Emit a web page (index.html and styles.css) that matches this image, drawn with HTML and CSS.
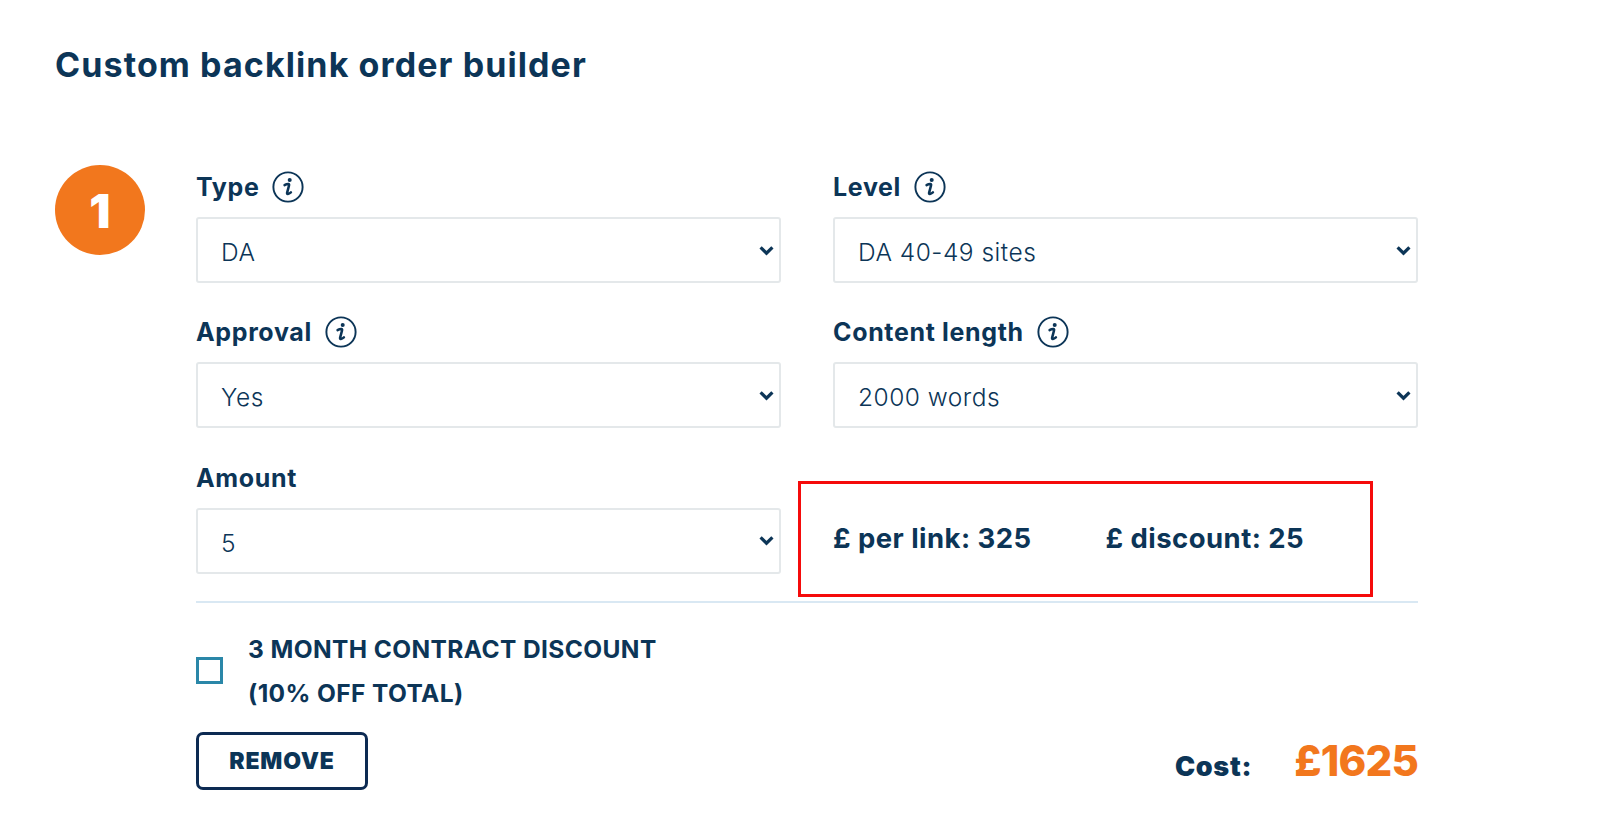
FILE: index.html
```html
<!DOCTYPE html>
<html lang="en">
<head>
<meta charset="utf-8">
<title>Custom backlink order builder</title>
<link rel="stylesheet" href="styles.css">
</head>
<body>
<main class="page">
  <h1 class="title">Custom backlink order builder</h1>
  <section class="builder">
    <div class="step">1</div>
    <div class="form">
      <div class="grid">
        <div class="field">
          <div class="label">Type <svg class="info" viewBox="0 0 30 30"><circle cx="15" cy="15" r="13.7"/><path class="dot" d="M16.6 6.6a1.9 1.9 0 1 1-.01 3.8 1.9 1.9 0 0 1 .01-3.8z"/><path class="stem" d="M11.8 13.2c1.2-.7 2.6-1.1 3.7-1 .6.1.6.8.4 1.6l-1.7 6.4c-.2.9 0 1.4.7 1.3.9-.1 1.9-.7 2.8-1.5"/></svg></div>
          <div class="select"><span>DA</span><svg class="chev" viewBox="0 0 14 10"><path d="M1.5 2 7 7.5 12.5 2"/></svg></div>
        </div>
        <div class="field">
          <div class="label">Level <svg class="info" viewBox="0 0 30 30"><circle cx="15" cy="15" r="13.7"/><path class="dot" d="M16.6 6.6a1.9 1.9 0 1 1-.01 3.8 1.9 1.9 0 0 1 .01-3.8z"/><path class="stem" d="M11.8 13.2c1.2-.7 2.6-1.1 3.7-1 .6.1.6.8.4 1.6l-1.7 6.4c-.2.9 0 1.4.7 1.3.9-.1 1.9-.7 2.8-1.5"/></svg></div>
          <div class="select"><span>DA 40-49 sites</span><svg class="chev" viewBox="0 0 14 10"><path d="M1.5 2 7 7.5 12.5 2"/></svg></div>
        </div>
        <div class="field">
          <div class="label">Approval <svg class="info" viewBox="0 0 30 30"><circle cx="15" cy="15" r="13.7"/><path class="dot" d="M16.6 6.6a1.9 1.9 0 1 1-.01 3.8 1.9 1.9 0 0 1 .01-3.8z"/><path class="stem" d="M11.8 13.2c1.2-.7 2.6-1.1 3.7-1 .6.1.6.8.4 1.6l-1.7 6.4c-.2.9 0 1.4.7 1.3.9-.1 1.9-.7 2.8-1.5"/></svg></div>
          <div class="select"><span>Yes</span><svg class="chev" viewBox="0 0 14 10"><path d="M1.5 2 7 7.5 12.5 2"/></svg></div>
        </div>
        <div class="field">
          <div class="label">Content length <svg class="info" viewBox="0 0 30 30"><circle cx="15" cy="15" r="13.7"/><path class="dot" d="M16.6 6.6a1.9 1.9 0 1 1-.01 3.8 1.9 1.9 0 0 1 .01-3.8z"/><path class="stem" d="M11.8 13.2c1.2-.7 2.6-1.1 3.7-1 .6.1.6.8.4 1.6l-1.7 6.4c-.2.9 0 1.4.7 1.3.9-.1 1.9-.7 2.8-1.5"/></svg></div>
          <div class="select"><span>2000 words</span><svg class="chev" viewBox="0 0 14 10"><path d="M1.5 2 7 7.5 12.5 2"/></svg></div>
        </div>
        <div class="field">
          <div class="label">Amount</div>
          <div class="select"><span>5</span><svg class="chev" viewBox="0 0 14 10"><path d="M1.5 2 7 7.5 12.5 2"/></svg></div>
        </div>
        <div class="prices">
          <span class="price">£ per link: 325</span>
          <span class="price">£ discount: 25</span>
          <div class="highlight"></div>
        </div>
      </div>
      <hr class="rule">
      <div class="contract">
        <span class="check"></span>
        <div class="contract-text">3 MONTH CONTRACT DISCOUNT<br>(10% OFF TOTAL)</div>
      </div>
      <div class="footer">
        <button class="remove" type="button">REMOVE</button>
        <div class="cost"><span class="cost-label">Cost:</span><span class="cost-value">£1625</span></div>
      </div>
    </div>
  </section>
</main>
</body>
</html>
```
FILE: styles.css
```css
* { box-sizing: border-box; }
html, body { margin: 0; background: #fff; }
body {
  width: 1600px;
  height: 813px;
  overflow: hidden;
  font-family: Inter, "Open Sans", "Liberation Sans", sans-serif;
  color: #0c3557;
}
.page { padding: 44px 0 0 55px; }
.title {
  margin: 0;
  font-size: 34px;
  line-height: 42px;
  font-weight: 700;
  letter-spacing: 1.1px;
}
.builder {
  display: flex;
  margin-top: 79px;
}
.step {
  flex: none;
  width: 90px;
  height: 90px;
  margin-right: 51px;
  border-radius: 50%;
  background: #f2771d;
  color: #fff;
  font-size: 47px;
  font-weight: 900;
  display: flex;
  align-items: center;
  justify-content: center;
}
.form { width: 1222px; padding-top: 6px; }
.grid {
  display: grid;
  grid-template-columns: 585px 585px;
  column-gap: 52px;
  row-gap: 33.4px;
}
.field { display: flex; flex-direction: column; gap: 14px; }
.label {
  display: flex;
  align-items: center;
  gap: 13px;
  height: 32px;
  font-size: 25px;
  line-height: 32px;
  font-weight: 700;
  letter-spacing: 0.65px;
}
.info { width: 32px; height: 32px; flex: none; }
.info circle { fill: none; stroke: #0c3557; stroke-width: 1.8; }
.info .dot { fill: #0c3557; }
.info .stem { fill: none; stroke: #0c3557; stroke-width: 2.4; stroke-linecap: round; }
.select {
  height: 66px;
  border: 2px solid #e4e8ea;
  border-radius: 3px;
  padding: 4px 5px 0 23px;
  display: flex;
  align-items: center;
  justify-content: space-between;
  font-size: 24.5px;
  font-weight: 300;
  letter-spacing: 0.5px;
}
.chev { width: 15px; height: 11px; margin-top: -4px; }
.chev path { fill: none; stroke: #0c3557; stroke-width: 3; }
.prices {
  position: relative;
  display: flex;
  align-items: flex-end;
  gap: 74px;
  padding-bottom: 20px;
  font-size: 27.5px;
  font-weight: 700;
  line-height: 32px;
  letter-spacing: 0.45px;
}
.highlight {
  position: absolute;
  left: -35px;
  top: 19px;
  width: 575px;
  height: 116px;
  border: 3px solid #f50b0b;
}
.rule {
  margin: 27px 0 0;
  border: 0;
  height: 2px;
  background: #d9e8f3;
}
.contract {
  display: flex;
  align-items: center;
  margin-top: 24px;
}
.check {
  width: 27px;
  height: 27px;
  margin-right: 25px;
  border: 3px solid #2a87a8;
}
.contract-text {
  font-size: 24.5px;
  line-height: 44px;
  font-weight: 700;
  letter-spacing: 0.4px;
}
.footer {
  display: flex;
  justify-content: space-between;
  align-items: center;
  margin-top: 17px;
}
.remove {
  width: 172px;
  height: 58px;
  border: 3px solid #0c2a52;
  border-radius: 7px;
  background: #fff;
  color: #0c3557;
  font: 900 23px Inter, "Liberation Sans", sans-serif;
  letter-spacing: 0.8px;
}
.cost { display: flex; align-items: baseline; gap: 42px; }
.cost-label { font-size: 27px; font-weight: 900; letter-spacing: 0.7px; }
.cost-value { font-size: 42px; line-height: 50px; font-weight: 800; color: #f2771d; letter-spacing: -0.8px; }
```
